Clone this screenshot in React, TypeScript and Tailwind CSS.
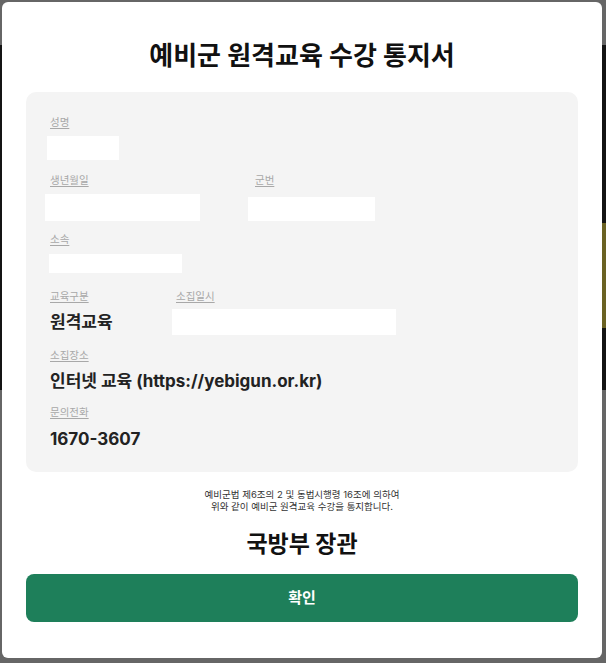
import React from "react";

const font = { fontFamily: "Inter, 'Noto Sans CJK KR', 'Noto Sans', sans-serif" };

function Label({ children }: { children: React.ReactNode }) {
  return (
    <div className="text-[10.5px] leading-[16px] text-[#a8a8a8] underline underline-offset-2">
      {children}
    </div>
  );
}

export default function App() {
  return (
    <div className="relative w-[606px] h-[663px] overflow-hidden bg-[#666666]" style={font}>
      <div className="flex flex-col">
        <div className="h-[45px] bg-[#666666]" />
        <div className="h-[345px] bg-[#141414] flex justify-end">
          <div className="w-[4px] mt-[178px] h-[105px] bg-[#6b6223]" />
        </div>
      </div>
      <div className="absolute left-[2px] top-[2px] w-[600px] h-[656px] bg-white rounded-[6px] px-[24px] pt-[36px] flex flex-col">
        <h1 className="text-center text-[26px] leading-[36px] font-bold text-[#111]">
          예비군 원격교육 수강 통지서
        </h1>
        <div className="mt-[18px] bg-[#f4f4f4] rounded-[10px] pl-[24px] pt-[23px] pb-[21px] flex flex-col">
          <div className="flex flex-col">
            <Label>성명</Label>
            <div className="mt-[5px] ml-[-3px] w-[72px] h-[24px] bg-white" />
          </div>
          <div className="mt-[13px] flex">
            <div className="flex flex-col w-[205px]">
              <Label>생년월일</Label>
              <div className="mt-[5px] ml-[-5px] w-[155px] h-[27px] bg-white" />
            </div>
            <div className="flex flex-col">
              <Label>군번</Label>
              <div className="mt-[8px] ml-[-7px] w-[127px] h-[24px] bg-white" />
            </div>
          </div>
          <div className="mt-[11px] flex flex-col">
            <Label>소속</Label>
            <div className="mt-[6px] ml-[-1px] w-[133px] h-[19px] bg-white" />
          </div>
          <div className="mt-[16px] flex">
            <div className="flex flex-col w-[126px]">
              <Label>교육구분</Label>
              <div className="mt-[5px] text-[17px] leading-[24px] font-bold text-[#222]">원격교육</div>
            </div>
            <div className="flex flex-col">
              <Label>소집일시</Label>
              <div className="mt-[4px] ml-[-4px] w-[224px] h-[26px] bg-white" />
            </div>
          </div>
          <div className="mt-[13px] flex flex-col">
            <Label>소집장소</Label>
            <div className="mt-[5px] text-[17px] leading-[24px] font-bold text-[#222]">
              인터넷 교육 (https://yebigun.or.kr)
            </div>
          </div>
          <div className="mt-[12px] flex flex-col">
            <Label>문의전화</Label>
            <div className="mt-[6px] text-[17px] leading-[24px] font-bold text-[#222]">1670-3607</div>
          </div>
        </div>
        <div className="mt-[17px] text-center text-[9.5px] leading-[12px] text-[#333]">
          <div>예비군법 제6조의 2 및 동법시행령 16조에 의하여</div>
          <div>위와 같이 예비군 원격교육 수강을 통지합니다.</div>
        </div>
        <div className="mt-[17px] text-center text-[23px] leading-[28px] font-bold text-[#111]">
          국방부 장관
        </div>
        <button className="mt-[16px] h-[48px] w-full rounded-[8px] bg-[#1e7f5a] text-white text-[15px] font-bold">
          확인
        </button>
      </div>
    </div>
  );
}
